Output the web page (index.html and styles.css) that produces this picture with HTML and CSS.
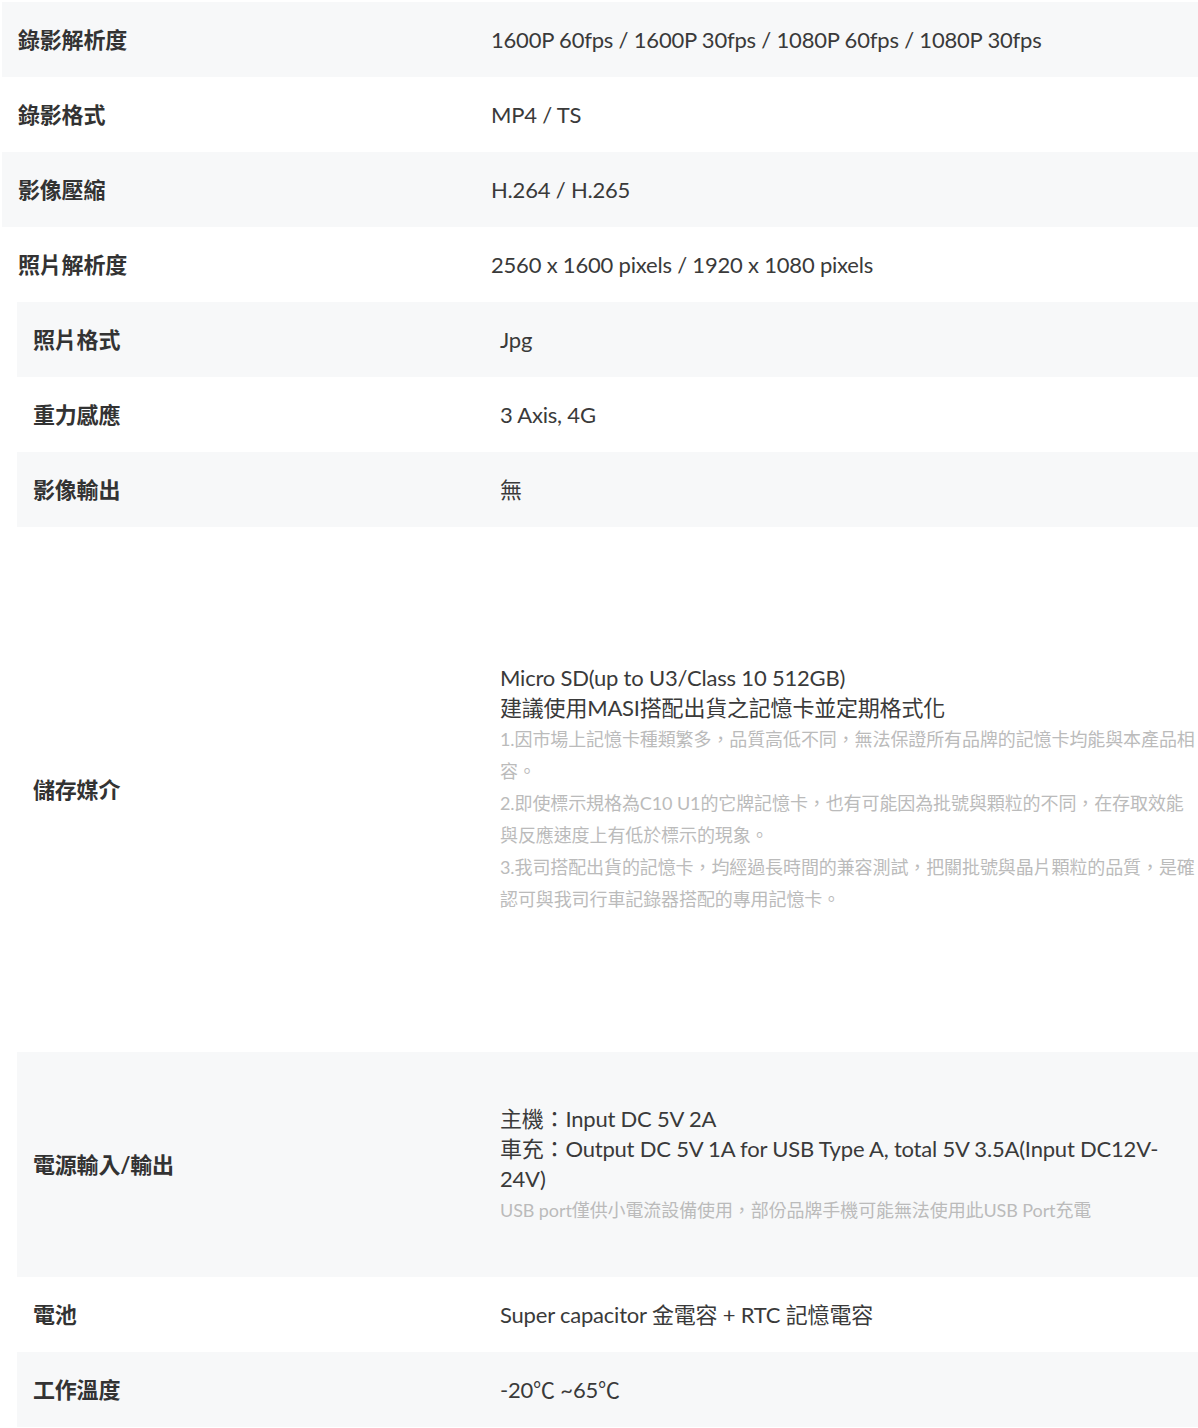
FILE: index.html
```html
<!DOCTYPE html>
<html lang="zh-Hant">
<head>
    <meta charset="UTF-8">
    <meta name="viewport" content="width=device-width, initial-scale=1.0">
    <title>產品規格</title>
    <link rel="stylesheet" href="styles.css">
</head>
<body>

    <div class="spec spec-main">
        <div class="spec-row">
            <div class="spec-label">錄影解析度</div>
            <div class="spec-value">1600P 60fps / 1600P 30fps / 1080P 60fps / 1080P 30fps</div>
        </div>
        <div class="spec-row">
            <div class="spec-label">錄影格式</div>
            <div class="spec-value">MP4 / TS</div>
        </div>
        <div class="spec-row">
            <div class="spec-label">影像壓縮</div>
            <div class="spec-value">H.264 / H.265</div>
        </div>
        <div class="spec-row">
            <div class="spec-label">照片解析度</div>
            <div class="spec-value">2560 x 1600 pixels / 1920 x 1080 pixels</div>
        </div>
    </div>

    <div class="spec spec-sub">
        <div class="spec-row">
            <div class="spec-label">照片格式</div>
            <div class="spec-value">Jpg</div>
        </div>
        <div class="spec-row">
            <div class="spec-label">重力感應</div>
            <div class="spec-value">3 Axis, 4G</div>
        </div>
        <div class="spec-row">
            <div class="spec-label">影像輸出</div>
            <div class="spec-value">無</div>
        </div>
        <div class="spec-row spec-storage">
            <div class="spec-label">儲存媒介</div>
            <div class="spec-value">
                <div>Micro SD(up to U3/Class 10 512GB)</div>
                <div>建議使用MASI搭配出貨之記憶卡並定期格式化</div>
                <p class="note">1.因市場上記憶卡種類繁多，品質高低不同，無法保證所有品牌的記憶卡均能與本產品相容。</p>
                <p class="note">2.即使標示規格為C10 U1的它牌記憶卡，也有可能因為批號與顆粒的不同，在存取效能與反應速度上有低於標示的現象。</p>
                <p class="note">3.我司搭配出貨的記憶卡，均經過長時間的兼容測試，把關批號與晶片顆粒的品質，是確認可與我司行車記錄器搭配的專用記憶卡。</p>
            </div>
        </div>
        <div class="spec-row spec-power">
            <div class="spec-label">電源輸入/輸出</div>
            <div class="spec-value">
                <div>主機：Input DC 5V 2A</div>
                <div>車充：Output DC 5V 1A for USB Type A, total 5V 3.5A(Input DC12V-24V)</div>
                <p class="note">USB port僅供小電流設備使用，部份品牌手機可能無法使用此USB Port充電</p>
            </div>
        </div>
        <div class="spec-row">
            <div class="spec-label">電池</div>
            <div class="spec-value">Super capacitor 金電容 + RTC 記憶電容</div>
        </div>
        <div class="spec-row">
            <div class="spec-label">工作溫度</div>
            <div class="spec-value">-20℃ ~65℃</div>
        </div>
    </div>

</body>
</html>
```

FILE: styles.css
```css
/* General Styles */
body {
    font-family: "Lato", "Noto Sans CJK TC", sans-serif;
    background-color: #ffffff;
    color: #3a3a3a;
    margin: 0;
    padding: 2px 0 0 0;
}

/* Spec Tables */
.spec-main {
    margin-left: 2px;
}

.spec-sub {
    margin-left: 17px;
}

.spec-row {
    display: grid;
    grid-template-columns: 473px 1fr;
    align-items: center;
    min-height: 75px;
}

.spec-sub .spec-row {
    grid-template-columns: 467px 1fr;
}

.spec-row:nth-child(odd) {
    background: #f7f8f9;
}

.spec-label {
    padding: 0 16px;
    font-size: 22px;
    font-weight: bold;
    color: #333;
    line-height: 30px;
    letter-spacing: -0.2px;
}

.spec-value {
    padding: 0 0 0 16px;
    font-size: 22px;
    line-height: 30px;
    letter-spacing: -0.2px;
}

/* Long rows */
.spec-storage .spec-value {
    padding-top: 136px;
    padding-bottom: 137px;
}

.spec-power .spec-value {
    padding-top: 52px;
    padding-bottom: 51px;
}

.note {
    margin: 0;
    font-size: 18px;
    line-height: 32px;
    letter-spacing: -0.1px;
    color: #bbbbbb;
}
```
